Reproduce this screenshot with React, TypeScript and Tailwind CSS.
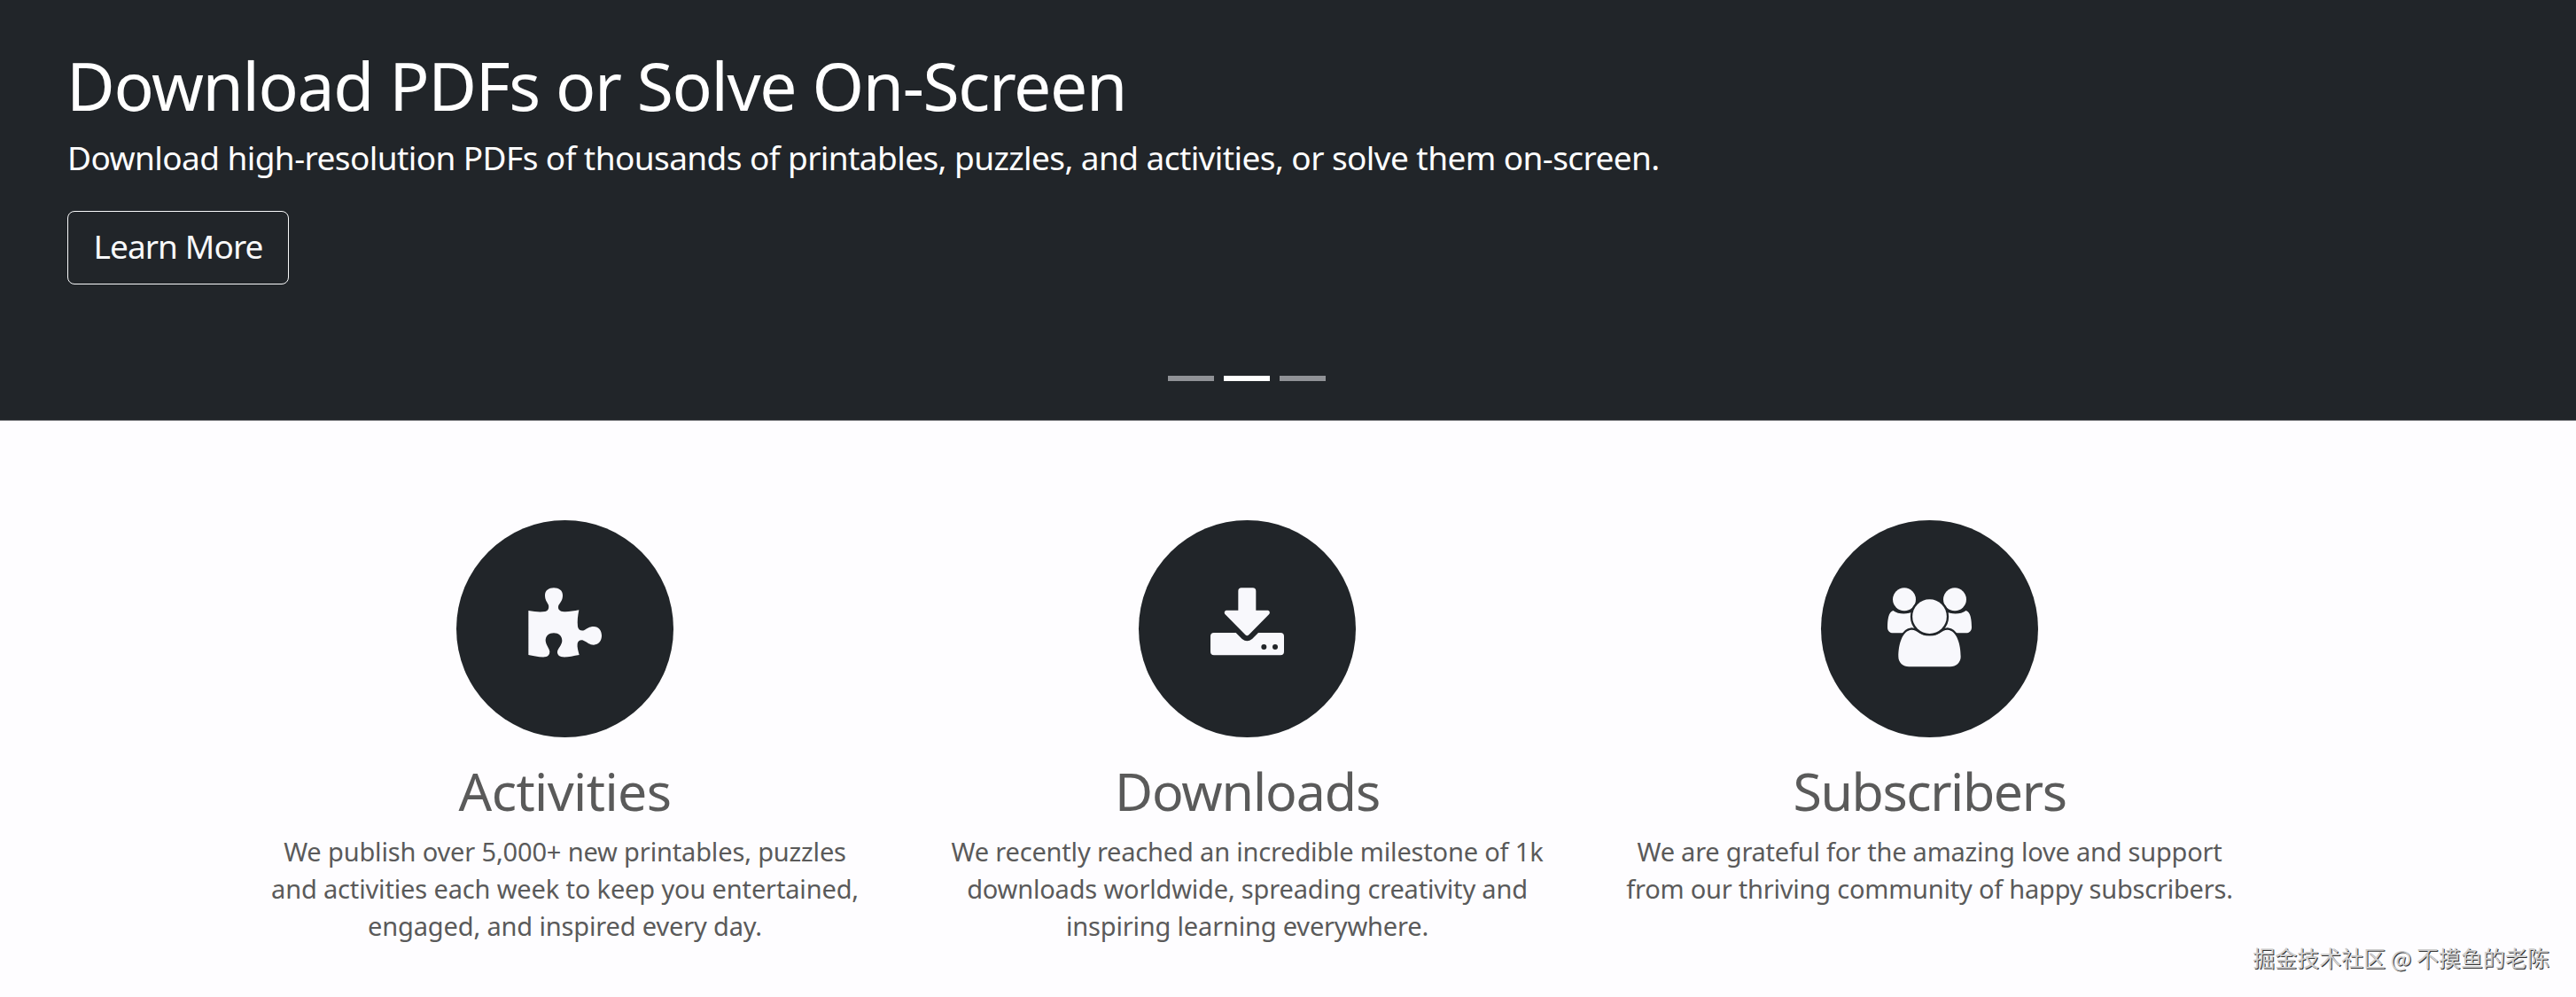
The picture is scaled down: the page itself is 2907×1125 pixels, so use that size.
import React from "react";

interface Feature {
  title: string;
  tracking: string;
  textTracking: string;
  lines: string[];
  icon: React.ReactNode;
}

const PuzzleIcon = () => (
  <svg viewBox="270 275 285 285" className="w-[95px] h-[95px]" fill="currentColor" aria-hidden="true">
    <path d="M289 356C310 360 330 362 346 359C357 356 359 346 357 337C352 326 345 320 345 304C345 288 358 279 375 279C392 279 405 288 405 304C405 320 398 326 391 338C388 348 391 357 404 359C420 361 440 358 460 354C456 375 454 390 456 410C458 421 467 426 477 423C488 417 494 410 510 410C527 410 537 424 537 441C537 458 527 472 510 472C495 472 488 462 475 457C465 454 457 458 455 468C453 480 458 494 461 506C440 510 420 514 404 513C392 512 386 503 387 495C389 483 402 474 403 458C403 441 391 432 375 432C358 432 347 441 347 458C349 475 360 483 361 495C361 506 355 512 345 513C325 514 305 509 289 506Z" />
  </svg>
);

const DownloadIcon = () => (
  <svg viewBox="270 275 285 285" className="w-[95px] h-[95px]" fill="currentColor" aria-hidden="true">
    <path d="M382 290q0-11 11-11H431q11 0 11 11V355H480c9 0 11 8 6 14L418 438q-6 6-12 0L338 369c-5-6-3-14 6-14H382Z" />
    <path d="M300 431H374L395 452Q412 466 429 452L450 431H525q12 0 12 12V495q0 12-12 12H300q-12 0-12-12V443q0-12 12-12Z" />
    <circle cx="469" cy="479" r="9" fill="#212529" />
    <circle cx="507" cy="479" r="9" fill="#212529" />
  </svg>
);

const GroupIcon = () => (
  <svg viewBox="270 275 285 285" className="w-[95px] h-[95px] overflow-visible" fill="currentColor" aria-hidden="true">
    <circle cx="327" cy="318" r="39" />
    <circle cx="498" cy="318" r="39" />
    <path d="M289 356C308 370 340 370 360 357L375 432H290C277 432 270 424 270 412C270 390 273 360 289 356Z" />
    <path d="M536 356C517 370 485 370 465 357L450 432H535C548 432 555 424 555 412C555 390 552 360 536 356Z" />
    <path
      d="M352 421C372 421 376 441 412.500 441C449 441 453 421 473 421C505 423 518 470 518 512C518 532 502 546 482 546H343C323 546 307 532 307 512C307 470 320 423 352 421Z"
      stroke="#212529"
      strokeWidth="14"
      paintOrder="stroke"
    />
    <circle cx="412.500" cy="376" r="58" stroke="#212529" strokeWidth="14" paintOrder="stroke" />
  </svg>
);

const features: Feature[] = [
  {
    title: "Activities",
    tracking: "tracking-[-0.6px]",
    textTracking: "tracking-[-0.15px]",
    lines: [
      "We publish over 5,000+ new printables, puzzles",
      "and activities each week to keep you entertained,",
      "engaged, and inspired every day.",
    ],
    icon: <PuzzleIcon />,
  },
  {
    title: "Downloads",
    tracking: "tracking-[-1.1px]",
    textTracking: "tracking-[-0.18px]",
    lines: [
      "We recently reached an incredible milestone of 1k",
      "downloads worldwide, spreading creativity and",
      "inspiring learning everywhere.",
    ],
    icon: <DownloadIcon />,
  },
  {
    title: "Subscribers",
    tracking: "tracking-[-1.4px]",
    textTracking: "tracking-[-0.22px]",
    lines: [
      "We are grateful for the amazing love and support",
      "from our thriving community of happy subscribers.",
    ],
    icon: <GroupIcon />,
  },
];

const slides = [0, 1, 2];
const activeSlide = 1;

const Banner: React.FC = () => (
  <section className="flex flex-col h-[475px] pt-[51px] pl-[76px] bg-[#212529] border-b border-[#8b8c90] text-white whitespace-nowrap">
    <h1 className="-ml-px text-[75px] leading-[90px] tracking-[-1.35px]">
      Download PDFs or Solve On-Screen
    </h1>
    <p className="mt-[9px] text-[37px] leading-[56px] tracking-[-0.58px]">
      Download high-resolution PDFs of thousands of printables, puzzles, and activities, or solve them on-screen.
    </p>
    <button className="mt-8 flex items-center justify-center self-start w-[250px] h-[83px] pb-[3px] border border-[#f8f9fa] rounded-lg text-[#f8f9fa] text-[37px] leading-[56px] tracking-[-0.9px]">
      Learn More
    </button>

    {/* Slide indicators */}
    <div className="mt-[103px] -ml-[76px] w-[2814px] flex justify-center gap-[11px]">
      {slides.map((slide) => (
        <span
          key={slide}
          className={`w-[52px] h-[6px] ${slide === activeSlide ? "bg-white" : "bg-[#909296]"}`}
        />
      ))}
    </div>
  </section>
);

const FeatureCard: React.FC<{ feature: Feature }> = ({ feature }) => (
  <div className="flex flex-col items-center w-[770px] text-center text-[#5a5a5a]">
    <div className="flex items-center justify-center w-[245px] h-[245px] rounded-full bg-[#212529] text-[#f8f8fc]">
      {feature.icon}
    </div>
    <h2 className={`mt-[25px] text-[59px] leading-[71px] ${feature.tracking}`}>{feature.title}</h2>
    <p className={`mt-3 text-[29px] leading-[42px] whitespace-nowrap ${feature.textTracking}`}>
      {feature.lines.map((line) => (
        <span key={line} className="block">
          {line}
        </span>
      ))}
    </p>
  </div>
);

export default function App() {
  return (
    <div className="relative w-[2907px] h-[1125px] overflow-hidden bg-[#fefdff] font-['Noto_Sans','Noto_Sans_CJK_SC',sans-serif]">
      <Banner />
      <main className="flex justify-center w-[2815px] pt-28">
        {features.map((feature) => (
          <FeatureCard key={feature.title} feature={feature} />
        ))}
      </main>
      <div className="absolute right-[30px] bottom-[27px] text-[25px] leading-[36px] whitespace-nowrap text-[#cfcfcf] font-['Noto_Sans_CJK_SC',sans-serif] [text-shadow:1px_1px_0_#333]">
        掘金技术社区 @ 不摸鱼的老陈
      </div>
    </div>
  );
}
